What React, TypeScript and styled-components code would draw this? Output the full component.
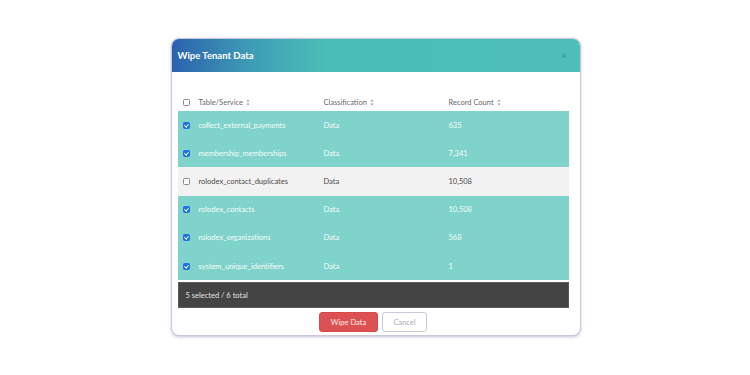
import styled, { createGlobalStyle } from 'styled-components';

type Row = {
  name: string;
  classification: string;
  count: string;
  selected: boolean;
};

const rows: Row[] = [
  { name: 'collect_external_payments', classification: 'Data', count: '635', selected: true },
  { name: 'membership_memberships', classification: 'Data', count: '7,341', selected: true },
  { name: 'rolodex_contact_duplicates', classification: 'Data', count: '10,508', selected: false },
  { name: 'rolodex_contacts', classification: 'Data', count: '10,508', selected: true },
  { name: 'rolodex_organizations', classification: 'Data', count: '568', selected: true },
  { name: 'system_unique_identifiers', classification: 'Data', count: '1', selected: true },
];

const SortIcon = () => (
  <svg width="4" height="7" viewBox="0 0 4 7">
    <path d="M2 0.5 L3.6 2.6 H0.4 Z" fill="#9a9a9a" />
    <path d="M2 6.5 L3.6 4.4 H0.4 Z" fill="#9a9a9a" />
  </svg>
);

const App = () => {
  const selectedCount = rows.filter((r) => r.selected).length;

  return (
    <>
      <GlobalStyle />
      <Page>
        <Modal>
          <Header>
            <Title>Wipe Tenant Data</Title>
            <Close>×</Close>
          </Header>

          <Body>
            <HeadRow>
              <Check $checked={false} />
              <HeadCell>
                Table/Service <SortIcon />
              </HeadCell>
              <HeadCell>
                Classification <SortIcon />
              </HeadCell>
              <HeadCell>
                Record Count <SortIcon />
              </HeadCell>
            </HeadRow>

            {rows.map((row) => (
              <DataRow key={row.name} $selected={row.selected}>
                <Check $checked={row.selected} />
                <Cell>{row.name}</Cell>
                <Cell>{row.classification}</Cell>
                <Cell>{row.count}</Cell>
              </DataRow>
            ))}

            <Summary>
              {selectedCount} selected / {rows.length} total
            </Summary>
          </Body>

          <Actions>
            <DangerButton>Wipe Data</DangerButton>
            <CancelButton>Cancel</CancelButton>
          </Actions>
        </Modal>
      </Page>
    </>
  );
};

const GlobalStyle = createGlobalStyle`
  html, body {
    margin: 0;
    padding: 0;
    background: #ffffff;
    font-family: Lato, "Noto Sans", sans-serif;
  }
`;

const Page = styled.div`
  width: 750px;
  height: 375px;
  display: flex;
  justify-content: center;
  padding-top: 38px;
  box-sizing: border-box;
`;

const Modal = styled.div`
  width: 410px;
  height: 298px;
  margin-left: 1px;
  box-sizing: border-box;
  border: 1px solid #c9c7dc;
  border-radius: 8px;
  background: #ffffff;
  box-shadow: 0 1px 3px rgba(120, 115, 170, 0.45);
  overflow: hidden;
  display: flex;
  flex-direction: column;
`;

const Header = styled.div`
  height: 33px;
  flex-shrink: 0;
  display: flex;
  align-items: center;
  justify-content: space-between;
  padding: 0 13px 0 6px;
  background: linear-gradient(90deg, #2b62ae 0%, #3f9eb6 20%, #4bbdb7 38%, #4dbfb8 100%);
`;

const Title = styled.h1`
  margin: 0;
  font-size: 9.5px;
  font-weight: 700;
  color: #ffffff;
`;

const Close = styled.span`
  font-size: 9px;
  color: #3f8f8c;
  line-height: 1;
`;

const Body = styled.div`
  display: flex;
  flex-direction: column;
  padding: 21px 11px 0 6px;
`;

const gridCols = `
  display: grid;
  grid-template-columns: 16px 125px 125px 1fr;
  align-items: center;
  padding-left: 5px;
`;

const HeadRow = styled.div`
  ${gridCols}
  height: 18px;
`;

const HeadCell = styled.div`
  display: flex;
  align-items: center;
  gap: 3px;
  font-size: 7.5px;
  color: #6a6a6a;
`;

const DataRow = styled.div<{ $selected: boolean }>`
  ${gridCols}
  height: 28.2px;
  background: ${(p) => (p.$selected ? '#80d3cb' : '#f2f2f2')};
  color: ${(p) => (p.$selected ? '#f3fbfa' : '#4a4a4a')};
`;

const Cell = styled.div`
  font-size: 7.5px;
`;

const Check = styled.span<{ $checked: boolean }>`
  width: 7px;
  height: 7px;
  box-sizing: border-box;
  border-radius: 1.5px;
  border: 1px solid ${(p) => (p.$checked ? '#1f6fe5' : '#8a8a8a')};
  background: ${(p) => (p.$checked ? '#1f6fe5' : '#ffffff')};
  position: relative;

  &::after {
    content: '';
    display: ${(p) => (p.$checked ? 'block' : 'none')};
    position: absolute;
    left: 1.5px;
    top: 0px;
    width: 1.5px;
    height: 3px;
    border: solid #ffffff;
    border-width: 0 1px 1px 0;
    transform: rotate(40deg);
  }
`;

const Summary = styled.div`
  margin-top: 2px;
  height: 26px;
  display: flex;
  align-items: center;
  padding-left: 7px;
  background: #444444;
  border: 1px solid #5a5a5a;
  box-sizing: border-box;
  font-size: 7.5px;
  color: #e2e2e2;
`;

const Actions = styled.div`
  display: flex;
  justify-content: center;
  gap: 4px;
  padding-top: 4px;
  padding-right: 5px;
`;

const BaseButton = styled.button`
  height: 20px;
  border-radius: 3px;
  font-family: inherit;
  font-size: 7.5px;
  padding: 0;
  cursor: pointer;
`;

const DangerButton = styled(BaseButton)`
  width: 59px;
  border: 1px solid #d84a4a;
  background: #dc5252;
  color: #fde9e9;
`;

const CancelButton = styled(BaseButton)`
  width: 45px;
  border: 1.5px solid #c6cbd6;
  background: #ffffff;
  color: #a9adb6;
`;

export default App;
